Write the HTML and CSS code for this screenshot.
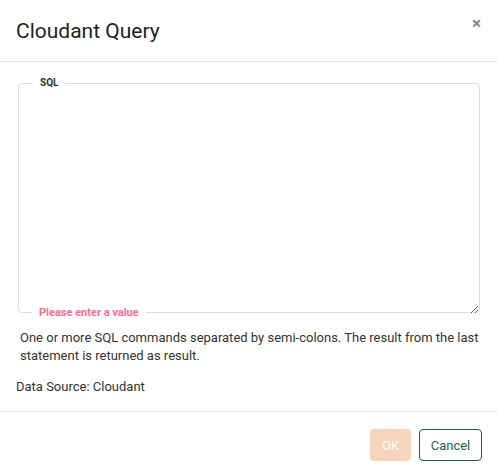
FILE: index.html
```html
<!DOCTYPE html>
<html>
<head>
<meta charset="utf-8">
<link rel="stylesheet" href="styles.css">
</head>
<body>
<div class="dialog">
  <div class="header">
    <h1 class="title">Cloudant Query</h1>
    <span class="close">×</span>
  </div>
  <div class="content">
    <div class="field">
      <fieldset class="box">
        <legend class="legend">SQL</legend>
        <textarea class="input"></textarea>
      </fieldset>
      <span class="error">Please enter a value</span>
    </div>
    <p class="help">One or more SQL commands separated by semi-colons. The result from the last statement is returned as result.</p>
    <p class="source">Data Source: Cloudant</p>
  </div>
  <div class="footer">
    <button class="btn ok">OK</button>
    <button class="btn cancel">Cancel</button>
  </div>
</div>
</body>
</html>
```

FILE: styles.css
```css
html, body {
  margin: 0;
  padding: 0;
  background: #fff;
}
body {
  font-family: Roboto, "Liberation Sans", sans-serif;
  color: #333;
}
.dialog {
  width: 497px;
  height: 475px;
  display: flex;
  flex-direction: column;
}
.header {
  height: 62px;
  box-sizing: border-box;
  border-bottom: 1px solid #e2e2e2;
  display: flex;
  align-items: center;
  justify-content: space-between;
  padding: 0 16px 0 16px;
}
.title {
  margin: 0;
  font-size: 21px;
  font-weight: 400;
  color: #222;
  line-height: 24px;
  margin-top: 0px;
}
.close {
  font-size: 17px;
  font-weight: 700;
  color: #888;
  margin-top: -15px;
  margin-right: 0px;
}
.content {
  padding: 14px 16px 0 16px;
  flex: 1;
}
.field {
  position: relative;
  margin: 0 1px 0 2px;
}
.box {
  margin: 0;
  padding: 0;
  border: 1px solid #dcdcdc;
  border-radius: 4px;
  height: 237px;
  box-sizing: border-box;
}
.legend {
  margin-left: 14px;
  padding: 0 7px;
  font-size: 10px;
  font-weight: 700;
  color: #333;
  line-height: 14px;
}
.input {
  display: block;
  width: 100%;
  height: 224px;
  box-sizing: border-box;
  border: none;
  outline: none;
  margin: 0;
  padding: 4px;
  resize: vertical;
  background: transparent;
}
.error {
  position: absolute;
  left: 14px;
  bottom: -7px;
  padding: 0 7px;
  background: #fff;
  font-size: 11px;
  font-weight: 700;
  color: #ff6b8f;
  line-height: 14px;
}
.help {
  margin: 16px 0 0 4px;
  font-size: 13px;
  line-height: 18px;
  color: #333;
}
.source {
  margin: 13px 0 0 0;
  font-size: 13px;
  line-height: 18px;
  color: #333;
}
.footer {
  height: 64px;
  box-sizing: border-box;
  border-top: 1px solid #e2e2e2;
  display: flex;
  justify-content: flex-end;
  align-items: flex-start;
  padding: 17px 15px 0 0;
  gap: 8px;
}
.btn {
  font-family: Roboto, "Liberation Sans", sans-serif;
  font-size: 13px;
  height: 32px;
  border-radius: 4px;
  padding: 0;
  cursor: pointer;
}
.ok {
  width: 41px;
  background: #f9d4bd;
  color: #fff;
  border: none;
}
.cancel {
  width: 63px;
  background: #fff;
  color: #1d5f57;
  border: 1px solid #1d5f57;
}
```
